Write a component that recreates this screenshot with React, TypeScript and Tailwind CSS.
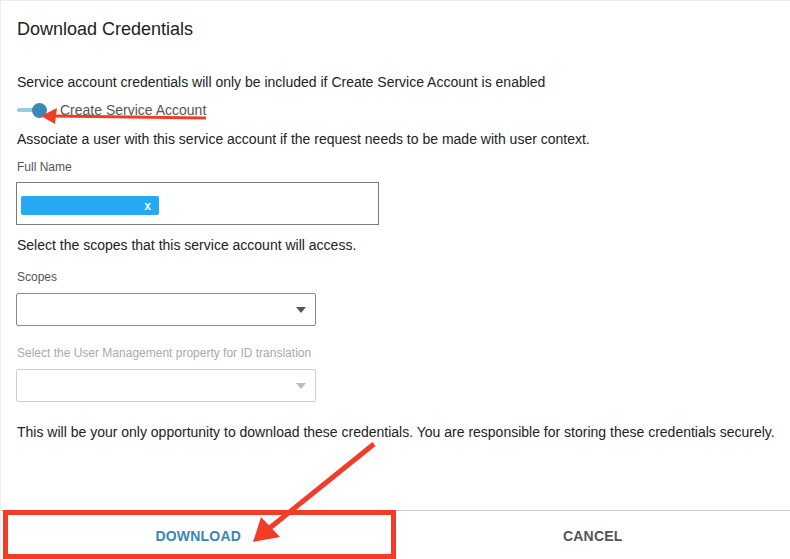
const Caret = ({ className }: { className: string }) => (
  <svg width="10" height="6" viewBox="0 0 10 6" className={className}>
    <path d="M0 0 L10 0 L5 6 Z" fill="currentColor" />
  </svg>
);

const Annotations = () => (
  <svg className="absolute inset-0 pointer-events-none" width="790" height="559" viewBox="0 0 790 559">
    {/* arrow to toggle */}
    <line x1="205" y1="117" x2="52" y2="115" stroke="#f33c28" strokeWidth="3" />
    <path d="M40 115 L56 107 L54 123 Z" fill="#f33c28" />
    {/* arrow to download */}
    <line x1="373" y1="443" x2="265" y2="530" stroke="#f33c28" strokeWidth="5" />
    <path d="M252 541 L260 516 L279 536 Z" fill="#f33c28" />
    {/* box around download */}
    <rect x="4.5" y="511.5" width="388" height="44" fill="none" stroke="#f33c28" strokeWidth="5" />
  </svg>
);

const App = () => {
  return (
    <div className="relative w-[790px] h-[559px] bg-white border-l border-t border-[#ececec] flex flex-col font-['Liberation_Sans',Arial,sans-serif] text-[#222]">
      <div className="flex-1 pl-[15px] pt-[17px] flex flex-col">
        <h2 className="text-[18px] leading-[22px] pl-px">Download Credentials</h2>

        <p className="mt-[32px] text-[14px] leading-[20px] pl-px">
          Service account credentials will only be included if Create Service Account is enabled
        </p>

        <label className="mt-[8px] flex items-center h-[20px] gap-[11px] pl-px">
          <span className="relative w-[32px] h-[20px] flex items-center">
            <span className="block w-[24px] h-[4px] rounded-full bg-[#94cce2]" />
            <span className="absolute left-[15px] top-[3px] w-[15px] h-[15px] rounded-full bg-[#3b87b8]" />
          </span>
          <span className="text-[14px] text-[#555]">Create Service Account</span>
        </label>

        <p className="mt-[9px] text-[14px] leading-[20px] pl-px">
          Associate a user with this service account if the request needs to be made with user context.
        </p>

        <div className="mt-[10px] text-[12px] leading-[16px] text-[#555] pl-px">Full Name</div>
        <div className="mt-[7px] w-[363px] h-[43px] border border-[#7a7a7a] px-[4px] pt-[13px]">
          <span className="flex items-center justify-end w-[138px] h-[19px] rounded-[2px] bg-[#27a8f2] pr-[8px] text-white text-[12px] font-bold leading-none">
            x
          </span>
        </div>

        <p className="mt-[10px] text-[14px] leading-[20px] pl-px">Select the scopes that this service account will access.</p>

        <div className="mt-[14px] text-[12px] leading-[16px] text-[#555] pl-px">Scopes</div>
        <div className="mt-[8px] w-[300px] h-[33px] border border-[#8a8a8a] rounded-[2px] flex items-center justify-end pr-[9px]">
          <Caret className="text-[#555]" />
        </div>

        <div className="mt-[19px] text-[12px] leading-[16px] text-[#aaa] pl-px">
          Select the User Management property for ID translation
        </div>
        <div className="mt-[8px] w-[300px] h-[33px] border border-[#d0d0d0] rounded-[2px] flex items-center justify-end pr-[9px]">
          <Caret className="text-[#bbb]" />
        </div>

        <p className="mt-[20px] text-[14px] leading-[20px] pl-px">
          This will be your only opportunity to download these credentials. You are responsible for storing these credentials securely.
        </p>
      </div>

      <div className="flex h-[49px] border-t border-[#c8c8c8] pt-[2px]">
        <button className="flex-1 text-[14px] font-bold text-[#3a86b5] tracking-[0.2px]">DOWNLOAD</button>
        <button className="flex-1 text-[14px] font-bold text-[#555] tracking-[0.2px]">CANCEL</button>
      </div>

      <Annotations />
    </div>
  );
};

export default App;
